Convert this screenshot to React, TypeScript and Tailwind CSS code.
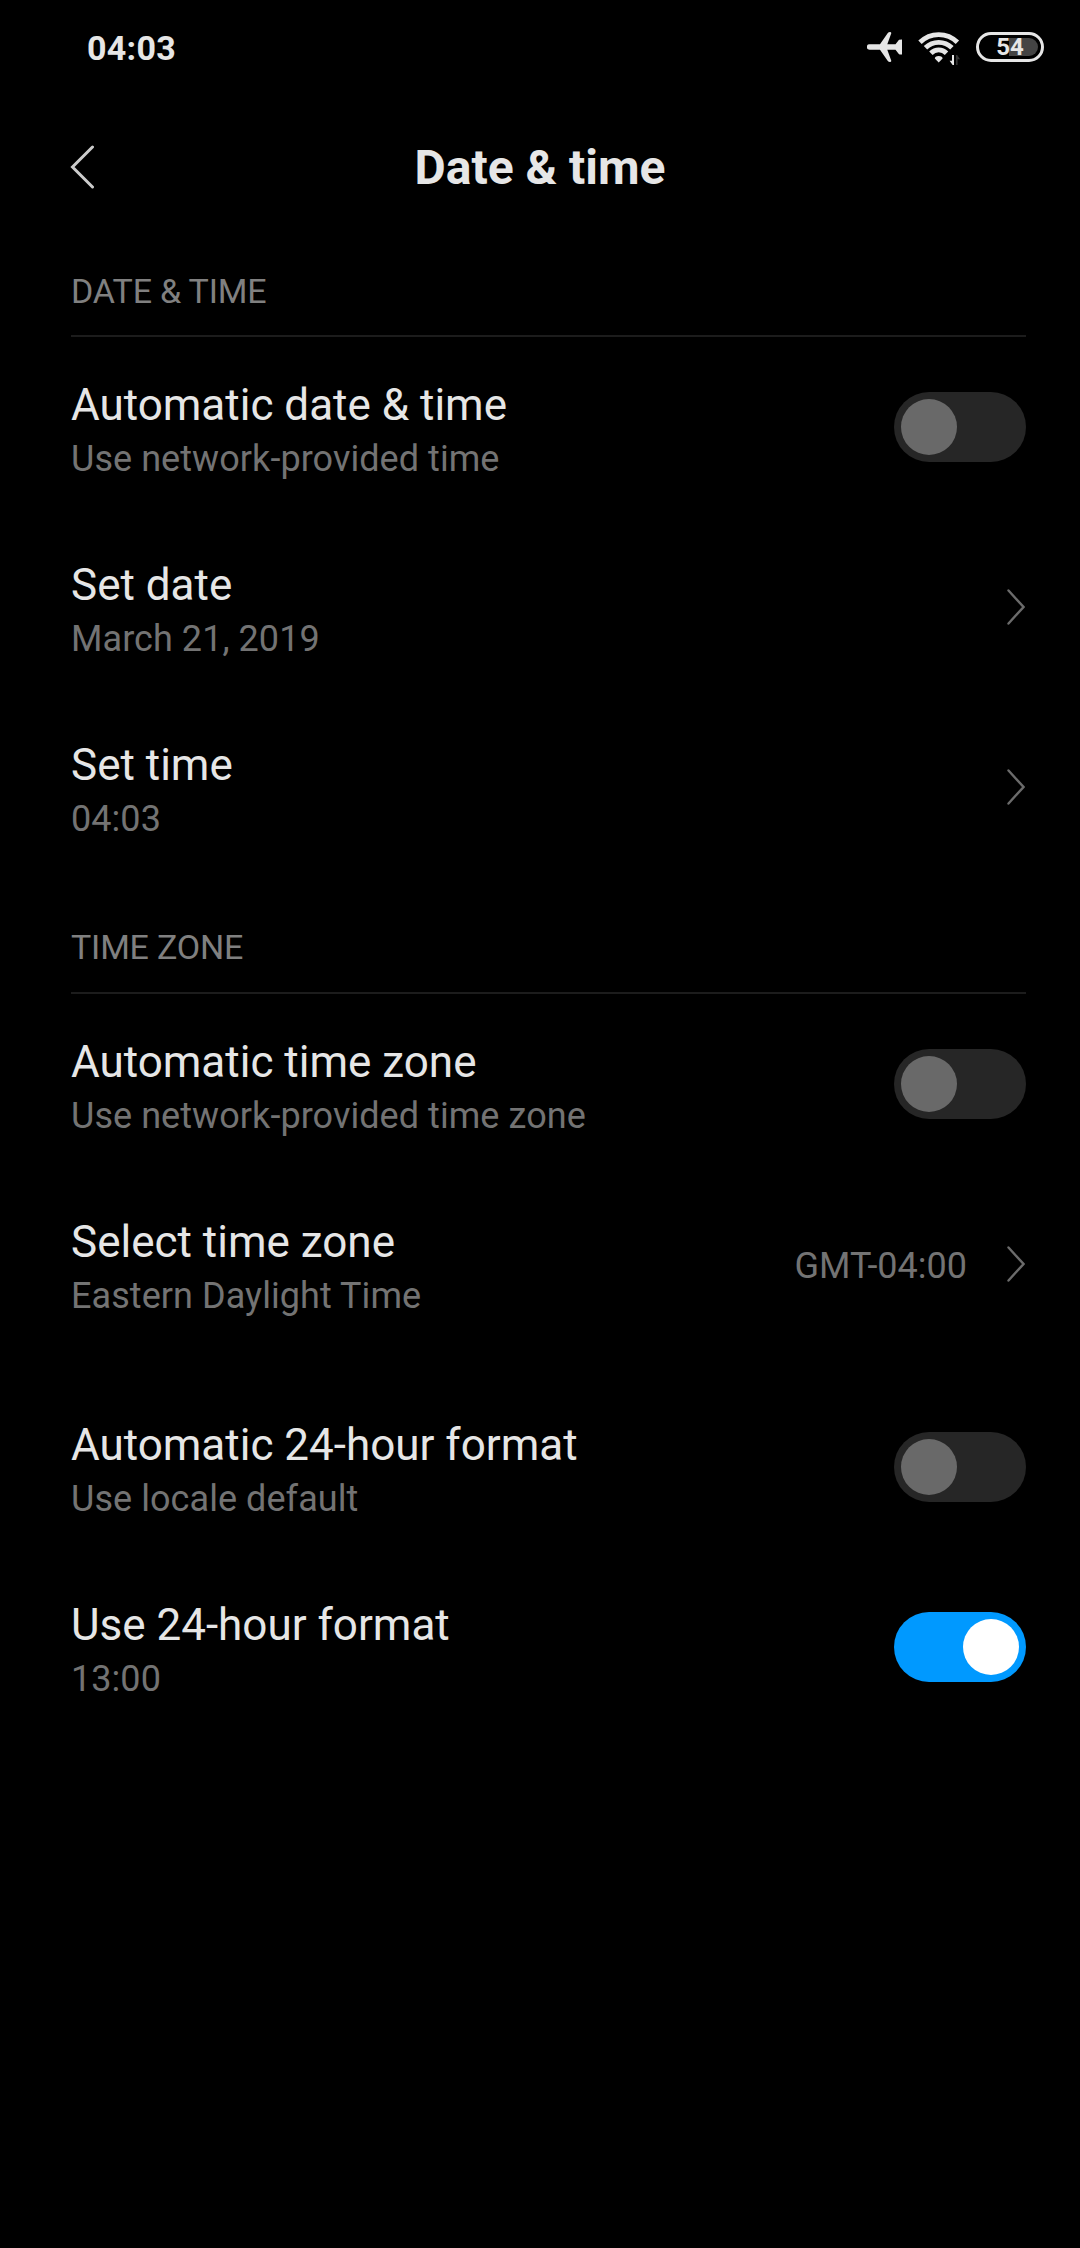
import { ReactNode } from 'react';

const Chevron = () => (
  <svg className="mr-px h-[36px] w-[18px]" viewBox="0 0 18 36" fill="none" stroke="#6b6b6b" strokeWidth="2.4" strokeLinecap="round">
    <path d="M1.5 1.5 16.5 18 1.5 34.5" />
  </svg>
);

const Airplane = () => (
  <svg className="h-[30px] w-[36px]" viewBox="0 0 36 30" fill="#e6e6e6">
    <path d="M2.5 12.3H13L20.8 1.1Q21.6 0 23 0Q24.6 0 24.2 1.5L20.3 12.3H28.5L32 7.8Q32.3 7.4 35 7.4V22.6Q32.3 22.6 32 22.2L28.5 17.7H20.3L24.2 28.5Q24.6 30 23 30Q21.6 30 20.8 28.9L13 17.7H2.5A2.7 2.7 0 0 1 2.5 12.3Z" />
  </svg>
);

const Wifi = () => (
  <svg className="h-[40px] w-[50px]" viewBox="0 0 50 40" fill="none" stroke="#e6e6e6" strokeWidth="4.8">
    <path d="M6 14.3A26.5 26.5 0 0 1 43.4 14.3" />
    <path d="M11.5 19.8A18.7 18.7 0 0 1 37.9 19.8" />
    <path d="M16.9 25.2A11 11 0 0 1 32.5 25.2" />
    <path d="M24.7 34.4 20.8 30.5Q20.8 28 24.7 28T28.6 30.5Z" fill="#e6e6e6" stroke="none" />
    {/* data activity arrows */}
    <path d="M38 27H40V37H38.6L35.6 32.8H38Z" fill="#e6e6e6" stroke="none" />
    <path d="M42 37H43.6V31.2H46L43.2 27H42Z" fill="#333333" stroke="none" />
  </svg>
);

function Battery({ level }: { level: number }) {
  return (
    <div className="relative flex h-[30px] w-[68px] items-center justify-center rounded-full border-3 border-[#e6e6e6]">
      <div className="absolute top-[3px] right-[3px] h-[18px] w-[29px] rounded-r-full bg-[#444444]" />
      <span className="relative text-[24px] leading-[24px] font-bold text-[#e6e6e6]">{level}</span>
    </div>
  );
}

function Toggle({ on = false }: { on?: boolean }) {
  return (
    <div className={`flex h-[70px] w-[132px] items-center rounded-full px-[7px] ${on ? 'justify-end bg-[#0099ff]' : 'bg-[#262626]'}`}>
      <div className={`h-[56px] w-[56px] rounded-full ${on ? 'bg-white' : 'bg-[#696969]'}`} />
    </div>
  );
}

function Section({ title, className }: { title: string; className: string }) {
  return (
    <div className={`flex items-end border-b-2 border-[#1c1c1c] text-[34px] leading-[40px] tracking-[-0.2px] text-[#808080] ${className}`}>
      {title}
    </div>
  );
}

function Row({ title, summary, children }: { title: string; summary: string; children: ReactNode }) {
  return (
    <div className="flex h-[180px] items-center justify-between">
      <div className="pt-[10px]">
        <p className="text-[44px] leading-[54px] text-[#e6e6e6]">{title}</p>
        <p className="text-[36px] leading-[54px] tracking-[0.06px] text-[#737373]">{summary}</p>
      </div>
      {children}
    </div>
  );
}

export default function App() {
  return (
    <div className="flex h-[2248px] w-[1080px] flex-col bg-black font-['Roboto',sans-serif]">
      {/* Status bar */}
      <div className="flex h-[96px] items-center justify-between pr-[36px] pl-[87px]">
        <span className="text-[34px] font-bold tracking-[0.3px] text-[#e6e6e6]">04:03</span>
        <div className="flex items-center pb-[2px]">
          <Airplane />
          <div className="mr-[12px] ml-[11px] pt-[2px]"><Wifi /></div>
          <Battery level={54} />
        </div>
      </div>

      {/* Title bar */}
      <div className="grid h-[144px] grid-cols-3 items-center px-[70px]">
        <svg className="mb-[3px] h-[44px] w-[25px]" viewBox="0 0 25 44" fill="none" stroke="#cccccc" strokeWidth="3" strokeLinecap="round">
          <path d="M22.5 2 2.5 22 22.5 42" />
        </svg>
        <h1 className="text-center text-[48px] font-bold whitespace-nowrap text-[#e6e6e6]">Date &amp; time</h1>
      </div>

      <div className="pr-[54px] pl-[71px]">
        <Section title="DATE & TIME" className="h-[97px] pb-[24px]" />
        <Row title="Automatic date & time" summary="Use network-provided time"><Toggle /></Row>
        <Row title="Set date" summary="March 21, 2019"><Chevron /></Row>
        <Row title="Set time" summary="04:03"><Chevron /></Row>
        <Section title="TIME ZONE" className="h-[117px] pb-[25px]" />
        <Row title="Automatic time zone" summary="Use network-provided time zone"><Toggle /></Row>
        <Row title="Select time zone" summary="Eastern Daylight Time">
          <div className="flex items-center gap-[40px]">
            <span className="pt-[3px] text-[36px] text-[#737373]">GMT-04:00</span>
            <Chevron />
          </div>
        </Row>
        <div className="h-[23px]" />
        <Row title="Automatic 24-hour format" summary="Use locale default"><Toggle /></Row>
        <Row title="Use 24-hour format" summary="13:00"><Toggle on /></Row>
      </div>
    </div>
  );
}
